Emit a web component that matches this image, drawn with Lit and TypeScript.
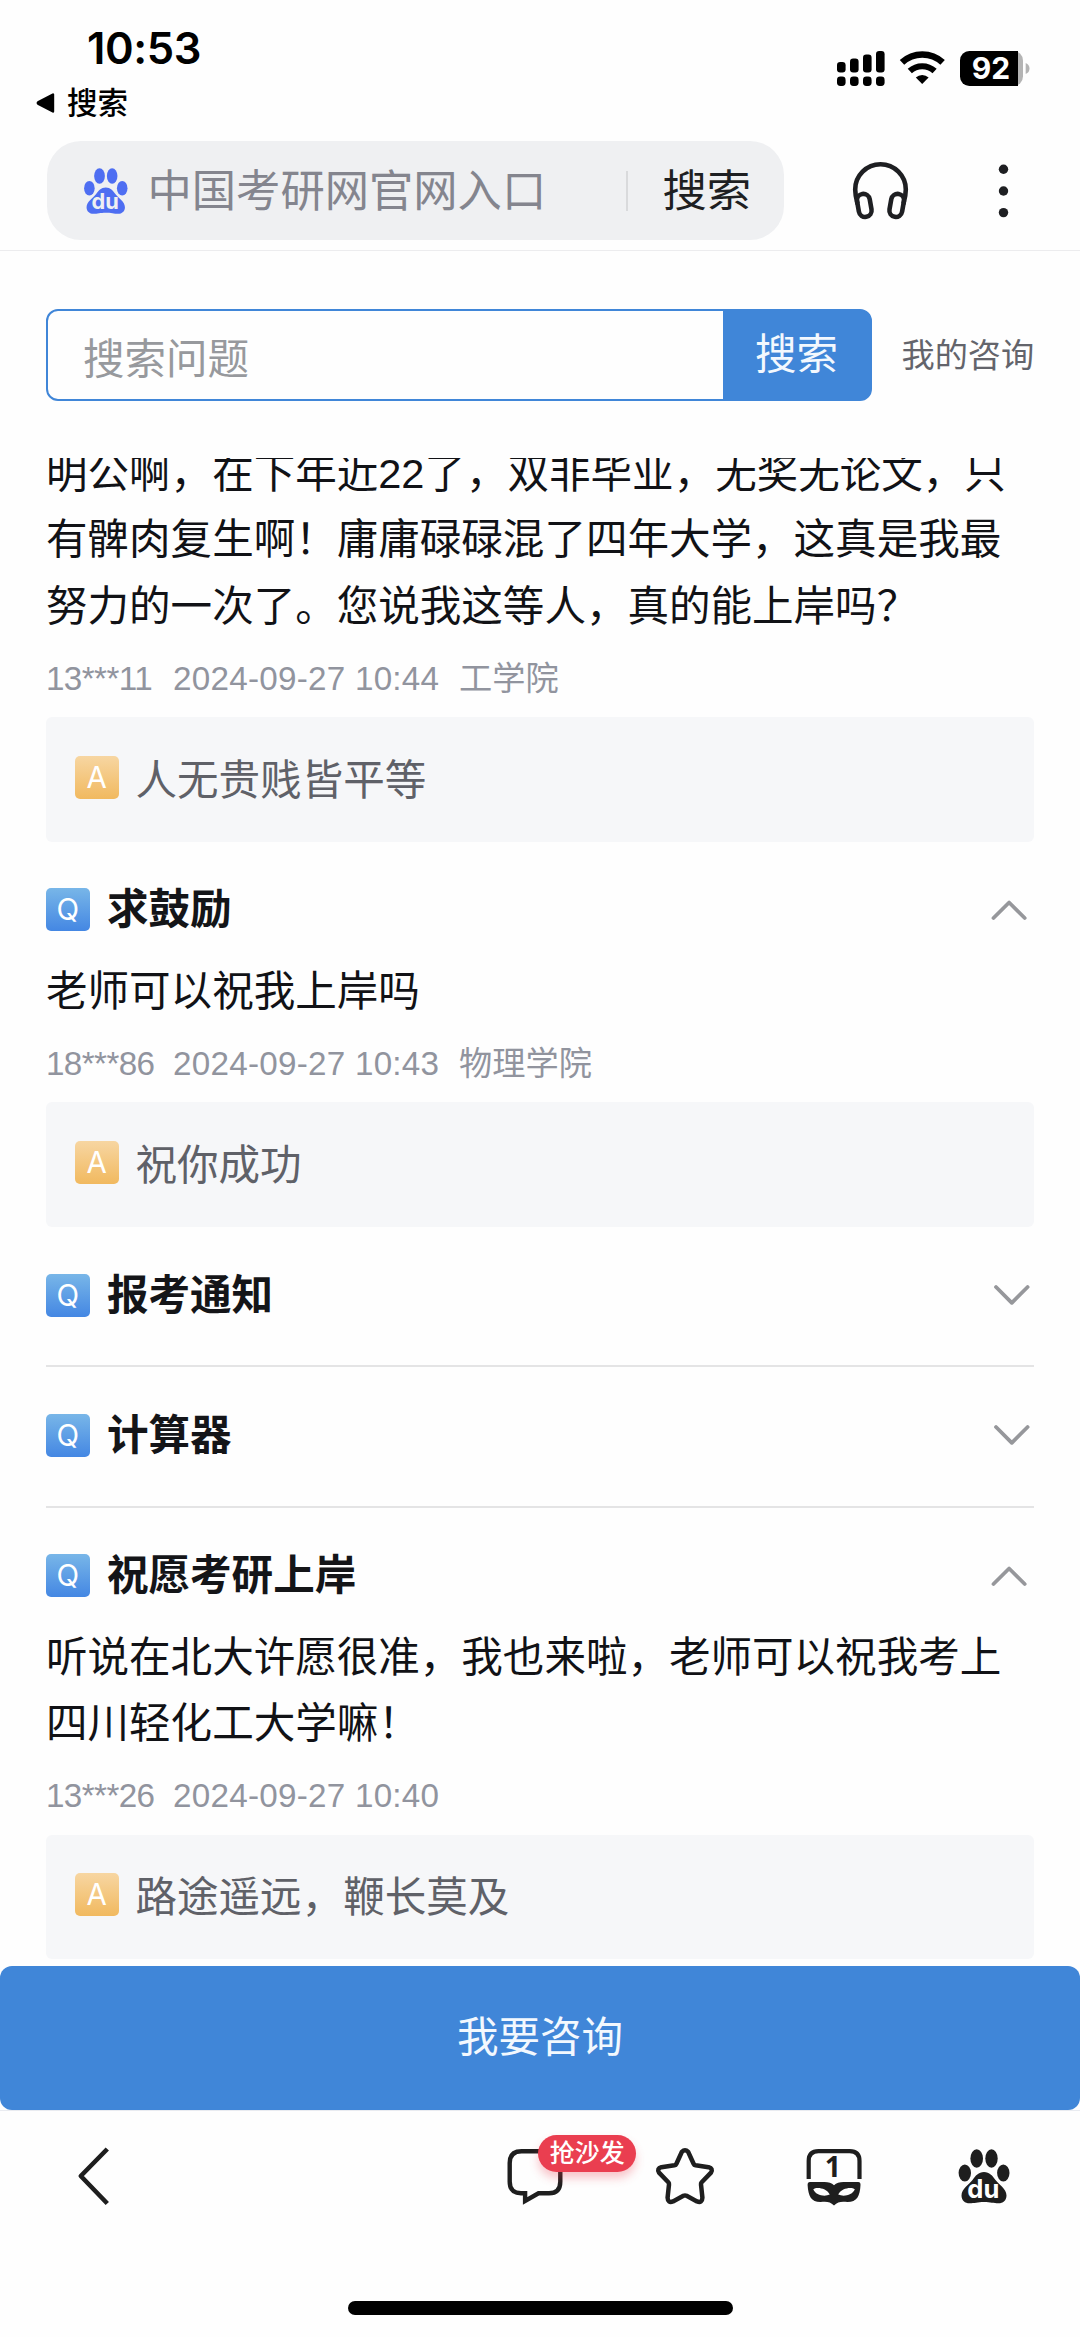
import { LitElement, html, css, svg, nothing } from "lit";
import { customElement, property } from "lit/decorators.js";

interface Entry {
  title?: string;
  lines?: string[];
  user?: string;
  time?: string;
  college?: string;
  answer?: string;
}

const entries: Entry[] = [
  {
    lines: [
      "明公啊，在下年近22了，双非毕业，无奖无论文，只",
      "有髀肉复生啊！庸庸碌碌混了四年大学，这真是我最",
      "努力的一次了。您说我这等人，真的能上岸吗？",
    ],
    user: "13***11",
    time: "2024-09-27 10:44",
    college: "工学院",
    answer: "人无贵贱皆平等",
  },
  {
    title: "求鼓励",
    lines: ["老师可以祝我上岸吗"],
    user: "18***86",
    time: "2024-09-27 10:43",
    college: "物理学院",
    answer: "祝你成功",
  },
  { title: "报考通知" },
  { title: "计算器" },
  {
    title: "祝愿考研上岸",
    lines: ["听说在北大许愿很准，我也来啦，老师可以祝我考上", "四川轻化工大学嘛！"],
    user: "13***26",
    time: "2024-09-27 10:40",
    answer: "路途遥远，鞭长莫及",
  },
];

const paw = (color: string, letters: string) => svg`
  <g fill=${color}>
    <ellipse cx="18.2" cy="9.5" rx="6.3" ry="9.3"/>
    <ellipse cx="33" cy="9.5" rx="6.2" ry="9.3"/>
    <ellipse cx="6.3" cy="24" rx="6.2" ry="8.6"/>
    <ellipse cx="44.8" cy="24" rx="6.2" ry="8.6"/>
    <path d="M25.5 23C31 23 34 26.8 37 31C40 35.2 48 39.5 48 46.5C48 51.5 44.5 54.3 40 54.3C35 54.3 32 53 25.5 53C19 53 16 54.3 11 54.3C6.5 54.3 3 51.5 3 46.5C3 39.5 11 35.2 14 31C17 26.8 20 23 25.5 23Z"/>
  </g>
  <text x="24.8" y="48.9" text-anchor="middle" fill=${letters} font-family="Inter, sans-serif" font-weight="700" font-size="25.5" textLength="32" lengthAdjust="spacingAndGlyphs">du</text>
`;

@customElement("qa-entry")
export class QaEntry extends LitElement {
  @property({ attribute: false }) entry: Entry = {};

  static styles = css`
    :host { display: block; }
    .head { display: flex; align-items: center; box-sizing: border-box; }
    .open { height: 115px; padding-top: 21px; }
    .closed { height: 140.4px; padding-bottom: 2.4px; border-bottom: 2.8px solid #e4e4e5; }
    .mark {
      width: 43.5px; height: 43px; border-radius: 5px; flex: none;
      display: flex; align-items: center; justify-content: center;
      color: #fff; font: 400 29.5px/41px Inter, "Liberation Sans", sans-serif;
    }
    .q { background: linear-gradient(#78b6e8, #4487e3); }
    .a { background: linear-gradient(#f7d6a2, #f1b95f); margin-bottom: 5px; }
    .title { margin-left: 17.5px; font-weight: 700; color: #141518; flex: 1; line-height: 60px; padding-top: 1px; }
    .chev { width: 40px; height: 24px; display: block; }
    .up { margin-right: 5px; }
    .down { margin-right: 2px; }
    .line { height: 66.46px; line-height: 69.8px; white-space: nowrap; color: #111216; }
    .meta {
      display: grid; grid-template-columns: 127px 286px auto; align-items: center; box-sizing: border-box;
      height: 79px; padding-top: 2px; font-size: 33.23px; line-height: 40px; color: #91949e; white-space: nowrap;
    }
    .user { letter-spacing: -0.6px; }
    .time { letter-spacing: 0.25px; }
    .answer {
      display: flex; align-items: center; height: 124.6px; box-sizing: border-box;
      padding-left: 29px; gap: 17px; border-radius: 6px; background: #f6f7f9; color: #5f6168;
    }
    .reply { padding-top: 2px; }
  `;

  render() {
    const e = this.entry;
    const open = !!e.lines;
    return html`
      ${e.title
        ? html`<div class="head ${open ? "open" : "closed"}">
            <span class="mark q">Q</span>
            <span class="title">${e.title}</span>
            <svg class="chev ${open ? "up" : "down"}" viewBox="0 0 40 24" fill="none" stroke="#96979b" stroke-width="3.8" stroke-linecap="round" stroke-linejoin="round">
              <path d=${open ? "M4.5 20L20.1 4.5L35.7 20" : "M4 4L19.8 19.8L35.6 4"} />
            </svg>
          </div>`
        : nothing}
      ${open
        ? html`${e.lines!.map((l) => html`<div class="line">${l}</div>`)}
            <div class="meta">
              <span class="user">${e.user}</span><span class="time">${e.time}</span><span>${e.college ?? ""}</span>
            </div>
            <div class="answer"><span class="mark a">A</span><span class="reply">${e.answer}</span></div>`
        : nothing}
    `;
  }
}

@customElement("app-root")
export class AppRoot extends LitElement {
  static styles = css`
    :host {
      display: flex; flex-direction: column; width: 1080px; height: 2337px; overflow: hidden;
      background: #fefefe; color: #111216;
      font: 400 41.54px/1.2 "Liberation Sans", "Noto Sans CJK SC", sans-serif;
    }
    svg { display: block; flex: none; }
    .status { height: 141px; display: flex; justify-content: space-between; flex: none; box-sizing: border-box; padding: 22px 50px 0 36px; color: #000; }
    .clock { font: 600 43.5px/53px Inter, sans-serif; padding-left: 51px; letter-spacing: -0.4px; }
    .back { display: flex; align-items: center; gap: 11px; font-size: 30.5px; font-weight: 500; line-height: 56px; }
    .indicators { display: flex; height: 40px; margin-top: 27px; }
    .navbar { height: 110px; flex: none; box-sizing: border-box; border-bottom: 1.5px solid #ececee; display: flex; padding-left: 47px; }
    .pill { width: 737px; height: 99px; border-radius: 34px; background: #eff0f2; display: flex; align-items: center; box-sizing: border-box; padding: 0 33px 0 37px; font-size: 44.3px; white-space: nowrap; }
    .query { color: #84858e; margin-left: 20px; flex: 1; padding-top: 3px; }
    .sep { width: 2.5px; height: 40px; background: #d9dadc; margin-right: 34px; }
    .go { color: #1e1f22; padding-top: 3px; }
    .phones { margin: 20px 0 0 68px; }
    .dots { margin: 20px 0 0 84.5px; }
    .ask { height: 207px; flex: none; display: flex; box-sizing: border-box; padding: 58px 0 0 46px; align-items: flex-start; }
    .box {
      width: 826px; height: 92px; border: 2.8px solid #4086d8; border-radius: 12px; box-sizing: border-box; display: flex;
      background: linear-gradient(to right, #fefefe 677px, #4086d8 677px) border-box;
    }
    .field { flex: 1; padding-left: 35px; line-height: 97px; height: 86px; color: #97999d; }
    .submit { width: 147px; color: #f3f8fe; text-align: center; line-height: 87px; height: 86px; }
    .mine { font-size: 33.2px; line-height: 93px; margin-left: 29.5px; color: #63646b; }
    .list { flex: 1; min-height: 0; overflow: hidden; padding: 0 46px; }
    .first { margin-top: -19px; }
    .cta { flex: none; height: 144px; border-radius: 12px; background: #4086d8; color: #f3f8fe; text-align: center; line-height: 144px; }
    .tools { flex: none; height: 191px; border-top: 1.5px solid #e9ebf0; box-sizing: border-box; display: flex; align-items: flex-start; padding: 35px 66px 0 74px; gap: 89.7px; }
    .grow { margin-right: auto; }
    .comment { position: relative; }
    .tag {
      position: absolute; left: 33px; top: -11px; width: 98.5px; height: 36.5px; border-radius: 19px;
      background: #ea3e50; color: #fff; font-size: 25px; font-weight: 500; line-height: 37px; text-align: center;
      white-space: nowrap; box-shadow: 0 6px 10px rgba(234, 62, 80, 0.3);
    }
    .home { flex: none; align-self: center; width: 385px; height: 14px; border-radius: 7px; background: #000; margin: 0 0 22px 1px; }
  `;

  render() {
    const cols = [9.5, 13, 17, 20.5];
    return html`
      <div class="status">
        <div>
          <div class="clock">10:53</div>
          <div class="back">
            <svg width="20" height="22" viewBox="0 0 20 22"><path d="M2.5 10L17 2.5V19.5L2.5 12Q1 11 2.5 10Z" stroke="#000" stroke-width="2.4" stroke-linejoin="round" /></svg>
            搜索
          </div>
        </div>
        <svg class="indicators" width="194" height="40" viewBox="836 49 194 40">
          ${cols.map((h, i) => svg`
            <rect x=${837 + i * 13} y=${72.5 - h - 1} width="8.6" height=${h + 1} rx="3.2"/>
            <rect x=${837 + i * 13} y="76.5" width="8.6" height="9.5" rx="3.4"/>`)}
          <g fill="none" stroke="#000">
            <path d="M902 62.4A30 30 0 0 1 942.6 62.4" stroke-width="6.6"/>
            <path d="M909.8 71A18.5 18.5 0 0 1 934.6 71" stroke-width="6.2"/>
          </g>
          <path d="M922.2 84L915.8 77.6A9.2 9.2 0 0 1 928.6 77.6Z"/>
          <rect x="960" y="51" width="63" height="35" rx="9.5" fill="#b4b4b4"/>
          <path d="M969.5 51H1018V86H969.5A9.5 9.5 0 0 1 960 76.5V60.5A9.5 9.5 0 0 1 969.5 51Z"/>
          <path d="M1025.7 63Q1029.5 64.5 1029.5 68.5Q1029.5 72.5 1025.7 74Z" fill="#b4b4b4"/>
          <text x="991" y="79" text-anchor="middle" fill="#fff" font-family="Inter, sans-serif" font-weight="700" font-size="30">92</text>
        </svg>
      </div>

      <div class="navbar">
        <div class="pill">
          <svg width="43.5" height="46" viewBox="0 0 51 54.5" preserveAspectRatio="none">${paw("#4e6ef2", "#eff0f2")}</svg>
          <span class="query">中国考研网官网入口</span>
          <span class="sep"></span>
          <span class="go">搜索</span>
        </div>
        <svg class="phones" width="58" height="60" viewBox="852 161 58 60" fill="none" stroke="#1e1f22" stroke-width="4.6">
          <path d="M857.6 204C855.6 197 855.2 193 855.2 189.5A25.3 25.3 0 0 1 905.8 189.5C905.8 193 905.4 197 903.4 204"/>
          <rect x="-6.4" y="-11.6" width="12.8" height="23.2" rx="6.4" transform="translate(864.3 205.4) rotate(-10)"/>
          <rect x="-6.4" y="-11.6" width="12.8" height="23.2" rx="6.4" transform="translate(896.7 205.4) rotate(10)"/>
        </svg>
        <svg class="dots" width="18" height="60" viewBox="0 0 18 60" fill="#1e1f22">
          <circle cx="8.5" cy="8.3" r="4.7"/><circle cx="8.5" cy="30" r="4.7"/><circle cx="8.5" cy="51.6" r="4.7"/>
        </svg>
      </div>

      <div class="ask">
        <div class="box"><span class="field">搜索问题</span><span class="submit">搜索</span></div>
        <span class="mine">我的咨询</span>
      </div>

      <div class="list">
        ${entries.map((e, i) => html`<qa-entry class=${i === 0 ? "first" : ""} .entry=${e}></qa-entry>`)}
      </div>

      <div class="cta">我要咨询</div>

      <div class="tools">
        <svg class="grow" width="40" height="60" viewBox="74 2146 40 60" fill="none" stroke="#1e1e1e" stroke-width="4.6" stroke-linejoin="round">
          <path d="M107.3 2149L80.8 2176L107.3 2203.5"/>
        </svg>
        <div class="comment">
          <svg width="60" height="60" viewBox="504.5 2146 60 60" fill="none" stroke="#1e1e1e" stroke-width="4.4">
            <path d="M521 2151.3H548.5Q559.8 2151.3 559.8 2163V2181.5Q559.8 2193.3 548.5 2193.3H538L524.6 2201V2193.3H520.5Q509.2 2193.3 509.2 2181.5V2163Q509.2 2151.3 521 2151.3Z"/>
          </svg>
          <span class="tag">抢沙发</span>
        </div>
        <svg width="60" height="60" viewBox="654 2146 60 60" fill="none" stroke="#1e1e1e" stroke-width="4.5" stroke-linejoin="round">
          <path d="M680.9 2151.8Q684 2148.6 687.1 2151.8L692.6 2163.7Q693.2 2165 694.6 2165.3L707.6 2167.2Q712.4 2168.6 710 2172.6L700.7 2182.2Q699.8 2183.3 700 2184.6L701.4 2197.6Q701.2 2203.4 696 2201.4L685.6 2195.8Q684 2195 682.4 2195.8L672 2201.4Q666.8 2203.4 666.6 2197.6L668 2184.6Q668.2 2183.3 667.3 2182.2L658 2172.6Q655.6 2168.6 660.4 2167.2L673.4 2165.3Q674.8 2165 675.4 2163.7Z"/>
        </svg>
        <svg width="60" height="60" viewBox="803.5 2146 60 60">
          <path d="M808.2 2179V2161Q808.2 2151.2 818 2151.2H849.2Q859 2151.2 859 2161V2179" fill="none" stroke="#1e1e1e" stroke-width="4.2"/>
          <text x="832.4" y="2177" text-anchor="middle" fill="#1e1e1e" font-family="'Open Sans', sans-serif" font-weight="700" font-size="28.5">1</text>
          <path fill="#1e1e1e" fill-rule="evenodd" d="M809.5 2182H824Q830 2182 833.5 2185.3Q837 2182 843 2182H857.7Q860.2 2182 860 2185C859.4 2196 856.5 2202 847 2202C840.5 2201.6 837.5 2201.5 833.5 2205.6C829.5 2201.5 826.5 2201.6 820 2202C810.5 2202 807.8 2196 807.1 2185Q807 2182 809.5 2182ZM812.8 2189.2C816 2186.8 826 2187.8 829.3 2194.6C824 2197 815 2195.4 812.8 2189.2ZM854.3 2189.2C851 2186.8 841 2187.8 837.7 2194.6C843 2197 852 2195.4 854.3 2189.2Z"/>
        </svg>
        <svg width="60" height="60" viewBox="-4.5 -3 60 60">${paw("#1e1e1e", "#fefefe")}</svg>
      </div>
      <div class="home"></div>
    `;
  }
}
